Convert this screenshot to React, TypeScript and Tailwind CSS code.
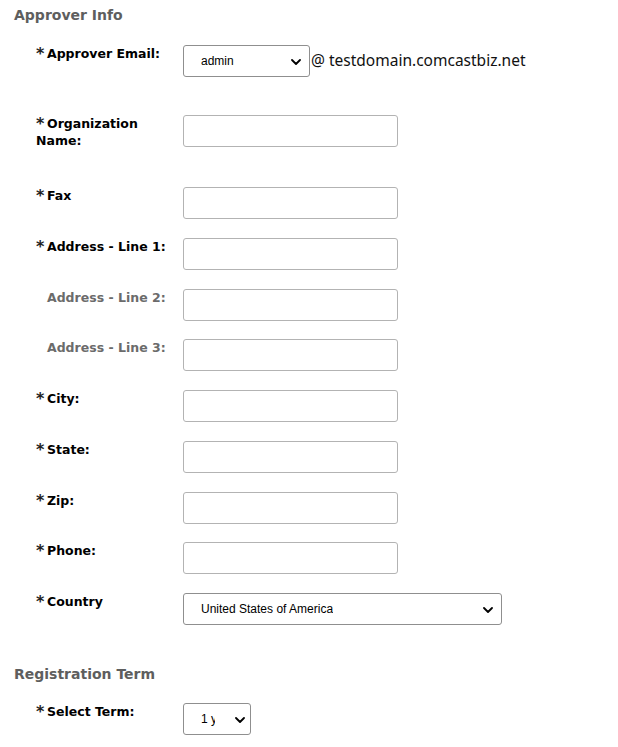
import type { ReactNode } from 'react'

const labelFont = { fontFamily: '"DejaVu Sans", Verdana, sans-serif' }

function Chevron({ className = '' }: { className?: string }) {
  return (
    <svg viewBox="0 0 10 6" className={`pointer-events-none absolute h-[6px] w-[10px] ${className}`} aria-hidden>
      <path d="M1 1 L5 5 L9 1" fill="none" stroke="#000" strokeWidth="1.8" strokeLinecap="round" strokeLinejoin="round" />
    </svg>
  )
}

function FakeSelect({
  value,
  width,
  textWidth,
  chevron = 'right-[8px]',
}: {
  value: string
  width: string
  textWidth?: string
  chevron?: string
}) {
  return (
    <div className={`relative h-[32px] ${width} shrink-0 overflow-hidden rounded-[3px] border border-[#8f8f8f] bg-white`}>
      <div
        className="flex h-full items-center overflow-hidden whitespace-nowrap pl-[17px] pr-[30px] text-[12px] text-black"
        style={{ fontFamily: '"Liberation Sans", Arial, sans-serif' }}
      >
        <span className={`overflow-hidden ${textWidth ?? ''}`}>{value}</span>
      </div>
      <Chevron className={`top-[13px] ${chevron}`} />
    </div>
  )
}

function TextBox() {
  return <div className="h-[32px] w-[215px] shrink-0 rounded-[3px] border border-[#b3b3b3] bg-white" />
}

function Row({
  label,
  required = true,
  muted = false,
  className = '',
  children,
}: {
  label: string
  required?: boolean
  muted?: boolean
  className?: string
  children: ReactNode
}) {
  return (
    <div className={`flex h-[32px] items-start ${className}`}>
      <div
        className={`w-[147px] shrink-0 pr-[10px] text-[12.5px] font-bold leading-[17px] ${muted ? 'pl-[11px] text-[#6b6b6b]' : 'text-black'}`}
        style={labelFont}
      >
        {required && (
          <span className="inline-block w-[11px] align-[-1px] text-[16px] leading-[12px] text-[#222]">*</span>
        )}
        {label}
      </div>
      {children}
    </div>
  )
}

export default function App() {
  return (
    <div className="min-h-[747px] w-[618px] bg-white pl-[14px]">
      <h2 className="pt-[6px] text-[14px] font-bold leading-[18px] text-[#5e5e5e]" style={labelFont}>
        Approver Info
      </h2>

      <div className="pl-[22px]">
        <Row label="Approver Email:" className="mt-[21px]">
          <div className="flex items-center">
            <FakeSelect value="admin" width="w-[127px]" />
            <span
              className="ml-[1px] text-[15.5px] text-[#111]"
              style={{ fontFamily: '"Noto Sans", "Open Sans", sans-serif' }}
            >
              @ testdomain.comcastbiz.net
            </span>
          </div>
        </Row>

        <Row label="Organization Name:" className="mt-[38px]">
          <TextBox />
        </Row>
        <Row label="Fax" className="mt-[40px]">
          <TextBox />
        </Row>
        <Row label="Address - Line 1:" className="mt-[19px]">
          <TextBox />
        </Row>
        <Row label="Address - Line 2:" required={false} muted className="mt-[19px]">
          <TextBox />
        </Row>
        <Row label="Address - Line 3:" required={false} muted className="mt-[18px]">
          <TextBox />
        </Row>
        <Row label="City:" className="mt-[19px]">
          <TextBox />
        </Row>
        <Row label="State:" className="mt-[19px]">
          <TextBox />
        </Row>
        <Row label="Zip:" className="mt-[19px]">
          <TextBox />
        </Row>
        <Row label="Phone:" className="mt-[18px]">
          <TextBox />
        </Row>
        <Row label="Country" className="mt-[19px]">
          <FakeSelect value="United States of America" width="w-[319px]" />
        </Row>
      </div>

      <h2 className="mt-[40px] text-[14px] font-bold leading-[18px] text-[#5e5e5e]" style={labelFont}>
        Registration Term
      </h2>

      <div className="pl-[22px]">
        <Row label="Select Term:" className="mt-[20px]">
          <FakeSelect value="1 year" width="w-[68px]" textWidth="w-[14px] shrink-0" chevron="right-[5px]" />
        </Row>
      </div>
    </div>
  )
}
